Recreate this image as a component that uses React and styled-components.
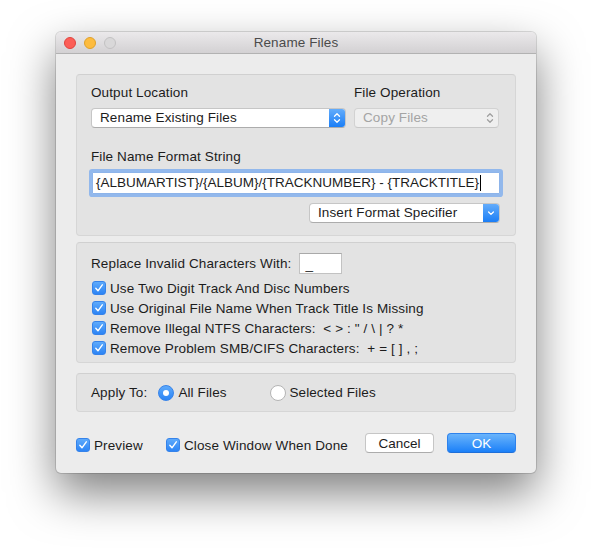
import React from 'react'
import styled, { createGlobalStyle } from 'styled-components'

const GlobalStyle = createGlobalStyle`
  body {
    margin: 0;
    background: #fff;
    font-family: "Liberation Sans", Arial, sans-serif;
    font-size: 13.5px;
    letter-spacing: 0.12px;
    color: #1c1c1c;
  }
`

const Page = styled.div`
  padding: 32px 0 80px 56px;
`

const Window = styled.div`
  width: 480px;
  background: #ececec;
  border-radius: 5px;
  overflow: hidden;
  box-shadow: 0 0 0 1px rgba(0, 0, 0, 0.13), 0 20px 46px rgba(0, 0, 0, 0.5);
`

const TitleBar = styled.div`
  height: 21px;
  display: grid;
  grid-template-columns: 1fr auto 1fr;
  align-items: center;
  padding: 0 8px;
  background: linear-gradient(#ebe9eb, #d3d1d3);
  border-bottom: 1px solid #b2b2b2;
`

const Lights = styled.div`
  display: flex;
  gap: 8px;
`

const Light = styled.span`
  width: 12px;
  height: 12px;
  box-sizing: border-box;
  border-radius: 50%;
  background: ${p => p.$fill};
  border: 1px solid ${p => p.$edge};
`

const Title = styled.div`
  color: #4b4b4b;
`

const Body = styled.div`
  padding: 20px;
`

const GroupBox = styled.div`
  background: #e3e3e3;
  border: 1px solid #d6d6d6;
  border-top-color: #d0d0d0;
  border-radius: 4px;
`

const OutputBox = styled(GroupBox)`
  padding: 10px 15px 12px 14px;
`

const ReplaceBox = styled(GroupBox)`
  margin-top: 6px;
  padding: 10px 15px 4px 14px;
`

const ApplyBox = styled(GroupBox)`
  margin-top: 10px;
  height: 39px;
  box-sizing: border-box;
  display: flex;
  align-items: center;
  padding: 0 15px 0 14px;
`

const OutputGrid = styled.div`
  display: grid;
  grid-template-columns: 255px 145px;
  column-gap: 8px;
  row-gap: 7px;
`

const Label = styled.div`
  line-height: 16px;
  margin-top: ${p => p.$mt || '0'};
`

const PopUp = styled.div`
  width: ${p => p.$w || 'auto'};
  height: 20px;
  box-sizing: border-box;
  display: flex;
  background: ${p => (p.$disabled ? '#efefef' : '#fff')};
  color: ${p => (p.$disabled ? '#a4a4a4' : '#1c1c1c')};
  border: 1px solid ${p => (p.$disabled ? '#d2d2d2' : '#c6c6c6')};
  border-bottom-color: ${p => (p.$disabled ? '#c8c8c8' : '#acacac')};
  border-radius: 4px;
  overflow: hidden;
`

const PopUpText = styled.div`
  flex: 1;
  padding-left: 8px;
  line-height: 18px;
  white-space: nowrap;
`

const PopUpArrows = styled.div`
  width: 16px;
  display: flex;
  align-items: center;
  justify-content: center;
  background: ${p => (p.$disabled ? 'transparent' : 'linear-gradient(#63acfb, #1b7ef6)')};
`

const TextField = styled.div`
  margin: 7px 0 0 1px;
  width: 408px;
  height: 22px;
  box-sizing: border-box;
  padding: 0 3px;
  background: #fff;
  border: 1px solid #8db4ea;
  box-shadow: 0 0 0 3px rgba(125, 172, 238, 0.8);
  border-radius: 1px;
  line-height: 20px;
  letter-spacing: 0;
  white-space: nowrap;
  display: flex;
  align-items: center;
`

const Caret = styled.span`
  display: inline-block;
  width: 1px;
  height: 16px;
  background: #000;
  margin-left: 1px;
`

const InsertRow = styled.div`
  display: flex;
  justify-content: flex-end;
  margin-top: 9px;
`

const ReplaceRow = styled.div`
  display: flex;
  align-items: center;
  gap: 8px;
  height: 21px;
`

const SmallField = styled.div`
  width: 43px;
  height: 21px;
  box-sizing: border-box;
  background: #fff;
  border: 1px solid #c2c2c2;
  border-top-color: #a9a9a9;
  padding-left: 5px;
  line-height: 22px;
`

const CheckList = styled.div`
  margin-top: 4px;
`

const CheckRow = styled.div`
  display: flex;
  align-items: center;
  gap: 4px;
  height: ${p => p.$h || '20px'};
  width: ${p => p.$w || 'auto'};
  padding-left: ${p => p.$pl || '1px'};
  white-space: pre;
`

const Box = styled.span`
  width: 14px;
  height: 14px;
  flex: none;
  box-sizing: border-box;
  border-radius: 3px;
  background: linear-gradient(#5eaafb, #2c84f5);
  border: 1px solid #3683ea;
  display: flex;
  align-items: center;
  justify-content: center;
`

const RadioOption = styled.div`
  display: flex;
  align-items: center;
  gap: ${p => p.$gap || '4px'};
  width: ${p => p.$w || 'auto'};
`

const Radio = styled.span`
  width: 16px;
  height: 16px;
  flex: none;
  box-sizing: border-box;
  border-radius: 50%;
  display: flex;
  align-items: center;
  justify-content: center;
  background: ${p => (p.$on ? 'linear-gradient(#5eaafb, #2c84f5)' : '#fff')};
  border: 1px solid ${p => (p.$on ? '#3683ea' : '#b4b4b4')};
  &::after {
    content: '';
    width: 6px;
    height: 6px;
    border-radius: 50%;
    background: #fff;
    display: ${p => (p.$on ? 'block' : 'none')};
  }
`

const ApplyLabel = styled.div`
  margin-right: 11px;
`

const BottomRow = styled.div`
  margin-top: 21px;
  display: flex;
  align-items: flex-end;
  height: 20px;
`

const Button = styled.button`
  width: 69px;
  height: 20px;
  box-sizing: border-box;
  padding: 0;
  font: inherit;
  border-radius: 4px;
  margin-left: ${p => p.$ml || '0'};
  color: ${p => (p.$primary ? '#fff' : '#1c1c1c')};
  background: ${p => (p.$primary ? 'linear-gradient(#6ab4fb, #1b80f8)' : '#fff')};
  border: 1px solid ${p => (p.$primary ? '#2e82ec' : '#c6c6c6')};
  border-bottom-color: ${p => (p.$primary ? '#1f6fd8' : '#acacac')};
`

const Check = () => (
  <Box>
    <svg width="10" height="10" viewBox="0 0 10 10">
      <path d="M1.8 5.3 L4 7.8 L8.3 1.8" stroke="#fff" strokeWidth="1.4" fill="none" strokeLinecap="round" strokeLinejoin="round" />
    </svg>
  </Box>
)

const UpDown = ({ color }) => (
  <svg width="10" height="14" viewBox="0 0 10 14">
    <path d="M2.5 5.2 L5 2.7 L7.5 5.2 M2.5 8.8 L5 11.3 L7.5 8.8" stroke={color} strokeWidth="1.3" fill="none" strokeLinecap="round" strokeLinejoin="round" />
  </svg>
)

const Down = () => (
  <svg width="10" height="14" viewBox="0 0 10 14">
    <path d="M2.6 6 L5 8.4 L7.4 6" stroke="#fff" strokeWidth="1.3" fill="none" strokeLinecap="round" strokeLinejoin="round" />
  </svg>
)

const checks = [
  'Use Two Digit Track And Disc Numbers',
  'Use Original File Name When Track Title Is Missing',
  'Remove Illegal NTFS Characters:  < > : " / \\ | ? *',
  'Remove Problem SMB/CIFS Characters:  + = [ ] , ;',
]

export default function App() {
  return (
    <>
      <GlobalStyle />
      <Page>
        <Window>
          <TitleBar>
            <Lights>
              <Light $fill="#fc5e57" $edge="#e0443e" />
              <Light $fill="#fdbc3f" $edge="#dfa12b" />
              <Light $fill="#d9d8d9" $edge="#c2c1c2" />
            </Lights>
            <Title>Rename Files</Title>
            <div />
          </TitleBar>

          <Body>
            <OutputBox>
              <OutputGrid>
                <Label>Output Location</Label>
                <Label>File Operation</Label>
                <PopUp>
                  <PopUpText>Rename Existing Files</PopUpText>
                  <PopUpArrows><UpDown color="#fff" /></PopUpArrows>
                </PopUp>
                <PopUp $disabled>
                  <PopUpText>Copy Files</PopUpText>
                  <PopUpArrows $disabled><UpDown color="#a0a0a0" /></PopUpArrows>
                </PopUp>
              </OutputGrid>
              <Label $mt="21px">File Name Format String</Label>
              <TextField>
                {'{ALBUMARTIST}/{ALBUM}/{TRACKNUMBER} - {TRACKTITLE}'}
                <Caret />
              </TextField>
              <InsertRow>
                <PopUp $w="191px">
                  <PopUpText>Insert Format Specifier</PopUpText>
                  <PopUpArrows><Down /></PopUpArrows>
                </PopUp>
              </InsertRow>
            </OutputBox>

            <ReplaceBox>
              <ReplaceRow>
                <div>Replace Invalid Characters With:</div>
                <SmallField>_</SmallField>
              </ReplaceRow>
              <CheckList>
                {checks.map(text => (
                  <CheckRow key={text}>
                    <Check />
                    <span>{text}</span>
                  </CheckRow>
                ))}
              </CheckList>
            </ReplaceBox>

            <ApplyBox>
              <ApplyLabel>Apply To:</ApplyLabel>
              <RadioOption $w="112px">
                <Radio $on />
                <span>All Files</span>
              </RadioOption>
              <RadioOption $gap="3px">
                <Radio />
                <span>Selected Files</span>
              </RadioOption>
            </ApplyBox>

            <BottomRow>
              <CheckRow $h="16px" $w="90px" $pl="0">
                <Check />
                <span>Preview</span>
              </CheckRow>
              <CheckRow $h="16px" $pl="0">
                <Check />
                <span>Close Window When Done</span>
              </CheckRow>
              <Button $ml="auto">Cancel</Button>
              <Button $primary $ml="13px">OK</Button>
            </BottomRow>
          </Body>
        </Window>
      </Page>
    </>
  )
}
